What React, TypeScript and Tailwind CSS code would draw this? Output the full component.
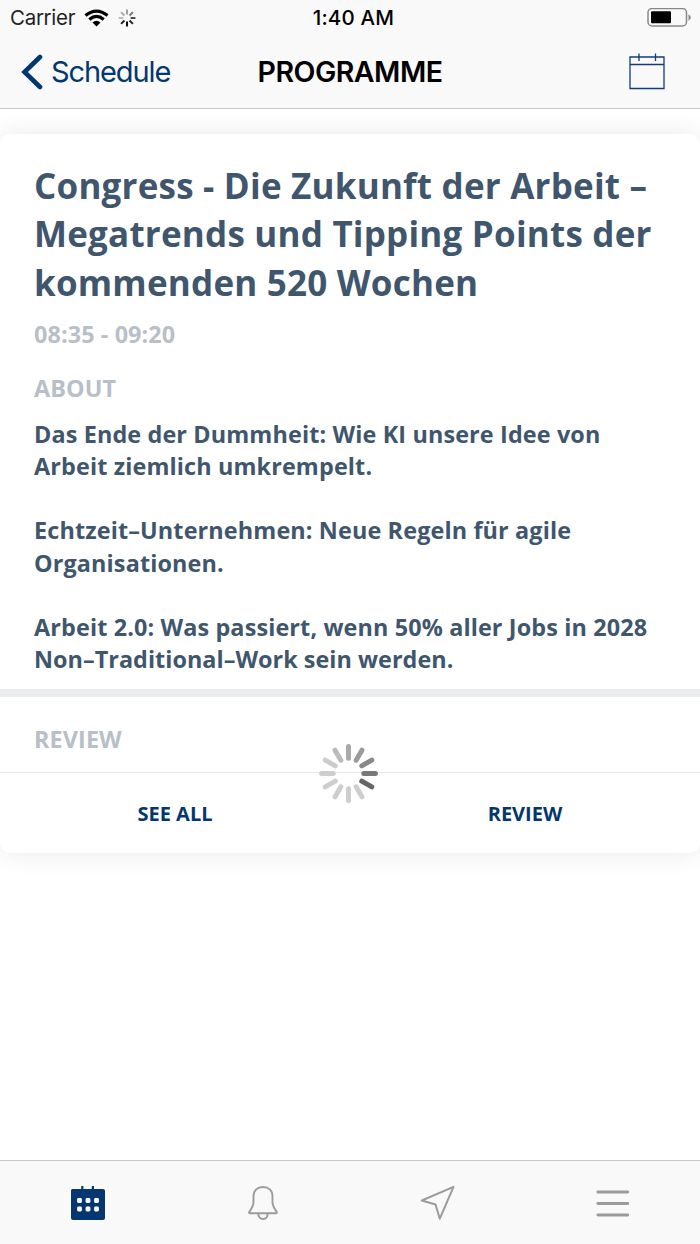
const spokes = [
  "#aaaaaa", "#9b9b9b", "#888888", "#777777", "#666666", "#cecece",
  "#cecece", "#cecece", "#cecece", "#cecece", "#cccccc", "#bbbbbb",
];

const statusSpokes = ["#999", "#777", "#444", "#222", "#000", "#222", "#bbb", "#aaa"];

function Spinner() {
  return (
    <svg className="absolute left-[318px] top-[46px]" width="61" height="61" viewBox="-30.5 -30.5 61 61">
      {spokes.map((c, i) => (
        <line key={i} x1="0" y1="-15.3" x2="0" y2="-26.9" stroke={c} strokeWidth="5" strokeLinecap="round" transform={`rotate(${i * 30})`} />
      ))}
    </svg>
  );
}

function StatusBar() {
  return (
    <div className="grid h-9 grid-cols-3 items-center pl-[10px] text-[20.5px] leading-9 text-black">
      <div className="flex items-center">
        <span className="w-[66px] whitespace-nowrap text-[#222] tracking-[-0.3px]">Carrier</span>
        <svg className="ml-[8px]" width="25" height="18" viewBox="0 0 25 18">
          <g fill="none" stroke="#000" strokeWidth="3.3">
            <path d="M1.5 6.5Q12.5-2.3 23.5 6.5" />
            <path d="M5.3 10.4Q12.5 4.4 19.7 10.4" />
          </g>
          <path d="M8.5 13.4Q12.5 10.2 16.5 13.4L12.5 17.4Z" />
        </svg>
        <svg className="ml-[9px]" width="18" height="18" viewBox="-9 -9 18 18">
          {statusSpokes.map((c, i) => (
            <line key={i} x1="0" y1="-3.6" x2="0" y2="-8.4" stroke={c} strokeWidth="1.9" transform={`rotate(${i * 45})`} />
          ))}
        </svg>
      </div>
      <div className="pr-[3px] text-center font-medium tracking-[0.2px]">1:40 AM</div>
      <svg className="ml-auto mr-[8px]" width="45" height="20" viewBox="0 0 45 20">
        <rect x="1" y="0.5" width="38.5" height="17.5" rx="4" fill="none" stroke="#888" strokeWidth="1.5" />
        <rect x="4" y="3.3" width="20" height="12" rx="1" />
        <path d="M41.5 6.3Q46 9.5 41.5 12.8Z" fill="#888" />
      </svg>
    </div>
  );
}

function Header() {
  return (
    <header className="h-[109px] border-b border-[#c8c8ca] bg-[#f9f9f9]">
      <StatusBar />
      <div className="grid h-[71px] grid-cols-3 items-center">
        <div className="flex items-center text-[29px] text-[#04376f]">
          <svg className="ml-[20px]" width="23" height="36" viewBox="0 0 23 36">
            <path d="M20 3L4.5 18L20 33" fill="none" stroke="currentColor" strokeWidth="4.6" strokeLinecap="round" />
          </svg>
          <span className="ml-[8px] tracking-[-1.1px]">Schedule</span>
        </div>
        <h1 className="pt-px text-center text-[28.5px] font-semibold tracking-[-0.5px] text-black">PROGRAMME</h1>
        <svg className="ml-auto mr-[34px]" width="38" height="38" viewBox="0 0.5 38 38" fill="none" stroke="#123c7c" strokeWidth="1.3">
          <path d="M2 4.5H36V36H2ZM2 12H36M11 1V8.5M27.5 1V8.5" />
        </svg>
      </div>
    </header>
  );
}

function Card() {
  return (
    <article className="mt-[25px] h-[719px] rounded-[10px] bg-white font-['Open_Sans',sans-serif] shadow-[0_0_26px_rgba(0,0,0,0.09)]">
      <div className="flex h-[555px] flex-col px-[34px] pt-[28px] font-bold">
        <h2 className="whitespace-nowrap text-[35px] leading-[48.3px] tracking-[0.21px] text-[#40566d]">
          Congress - Die Zukunft der Arbeit –<br />Megatrends und Tipping Points der<br />kommenden 520 Wochen
        </h2>
        <p className="mt-[9.7px] text-[23.4px] leading-[34px] tracking-[0.1px] text-[#b7c0c8]">08:35 - 09:20</p>
        <h3 className="mt-[20px] text-[23.4px] leading-[34px] tracking-[0.1px] text-[#b7c0c8]">ABOUT</h3>
        <p className="mt-[13px] whitespace-nowrap text-[23.4px] leading-[32.25px] tracking-[0.13px] text-[#40566d]">
          Das Ende der Dummheit: Wie KI unsere Idee von<br />Arbeit ziemlich umkrempelt.<br /><br />
          Echtzeit–Unternehmen: Neue Regeln für agile<br />Organisationen.<br /><br />
          Arbeit 2.0: Was passiert, wenn 50% aller Jobs in 2028<br />
          <span className="tracking-[0.03px]">Non–Traditional–Work sein werden.</span>
        </p>
      </div>
      <div className="h-2 bg-[#ebecf0]" />
      <section className="relative">
        <div className="flex h-[76px] items-center border-b border-[#e5e6e8] px-[34px] pt-[11px]">
          <h3 className="text-[23.4px] font-bold tracking-[0.1px] text-[#b7c0c8]">REVIEW</h3>
        </div>
        <div className="grid h-[80px] grid-cols-2 pt-px text-[20px] font-bold text-[#04376f]">
          <button>SEE ALL</button>
          <button>REVIEW</button>
        </div>
        <Spinner />
      </section>
    </article>
  );
}

function TabBar() {
  return (
    <nav className="mt-auto grid h-[84px] grid-cols-4 items-center border-t border-[#c8c8ca] bg-[#f9f9f9]">
      <button className="flex justify-center">
        <svg width="36" height="36" viewBox="0 0 36 36">
          <path d="M2.2 4H11.2V1H13.4V4H21.8V1H24V4H33Q35 4 35 6V33Q35 35 33 35H3Q1 35 1 33V6Q1 4 2.2 4Z" fill="#04376f" />
          {[9.5, 18, 26.5].map((x) => [15.5, 24].map((y) => (
            <rect key={`${x}-${y}`} x={x - 2.4} y={y - 2.4} width="4.8" height="4.8" rx="1.3" fill="#fff" />
          )))}
        </svg>
      </button>
      <button className="flex justify-center">
        <svg width="32" height="36" viewBox="0 0 32 36" fill="none" stroke="#9b9b9b" strokeWidth="1.9" strokeLinejoin="round">
          <path d="M3 28.2Q1.5 28.2 2.5 26.6Q6.5 21 6.5 17V11.5C6.5 5.2 10.5 2 16 2S25.5 5.2 25.5 11.5V17Q25.5 21 29.5 26.6Q30.5 28.2 29 28.2ZM11.2 28.2Q11.5 34 16 34T20.8 28.2" />
        </svg>
      </button>
      <button className="flex justify-center">
        <svg width="36" height="36" viewBox="0 0 36 36" fill="none" stroke="#9b9b9b" strokeWidth="2" strokeLinejoin="round">
          <path d="M33.5 1.8L1.8 15.5L15.5 19.5L19.8 33.7Z" />
        </svg>
      </button>
      <button className="flex justify-center">
        <svg width="36" height="36" viewBox="0 0 36 36" stroke="#9b9b9b" strokeWidth="2.8" strokeLinecap="round">
          <path d="M2.8 7H32.8M2.8 18.5H32.8M2.8 30H32.8" />
        </svg>
      </button>
    </nav>
  );
}

export default function App() {
  return (
    <div className="flex h-[1244px] w-[700px] flex-col overflow-hidden bg-white font-['Inter',sans-serif]">
      <div className="relative z-10"><Header /></div>
      <Card />
      <TabBar />
    </div>
  );
}
